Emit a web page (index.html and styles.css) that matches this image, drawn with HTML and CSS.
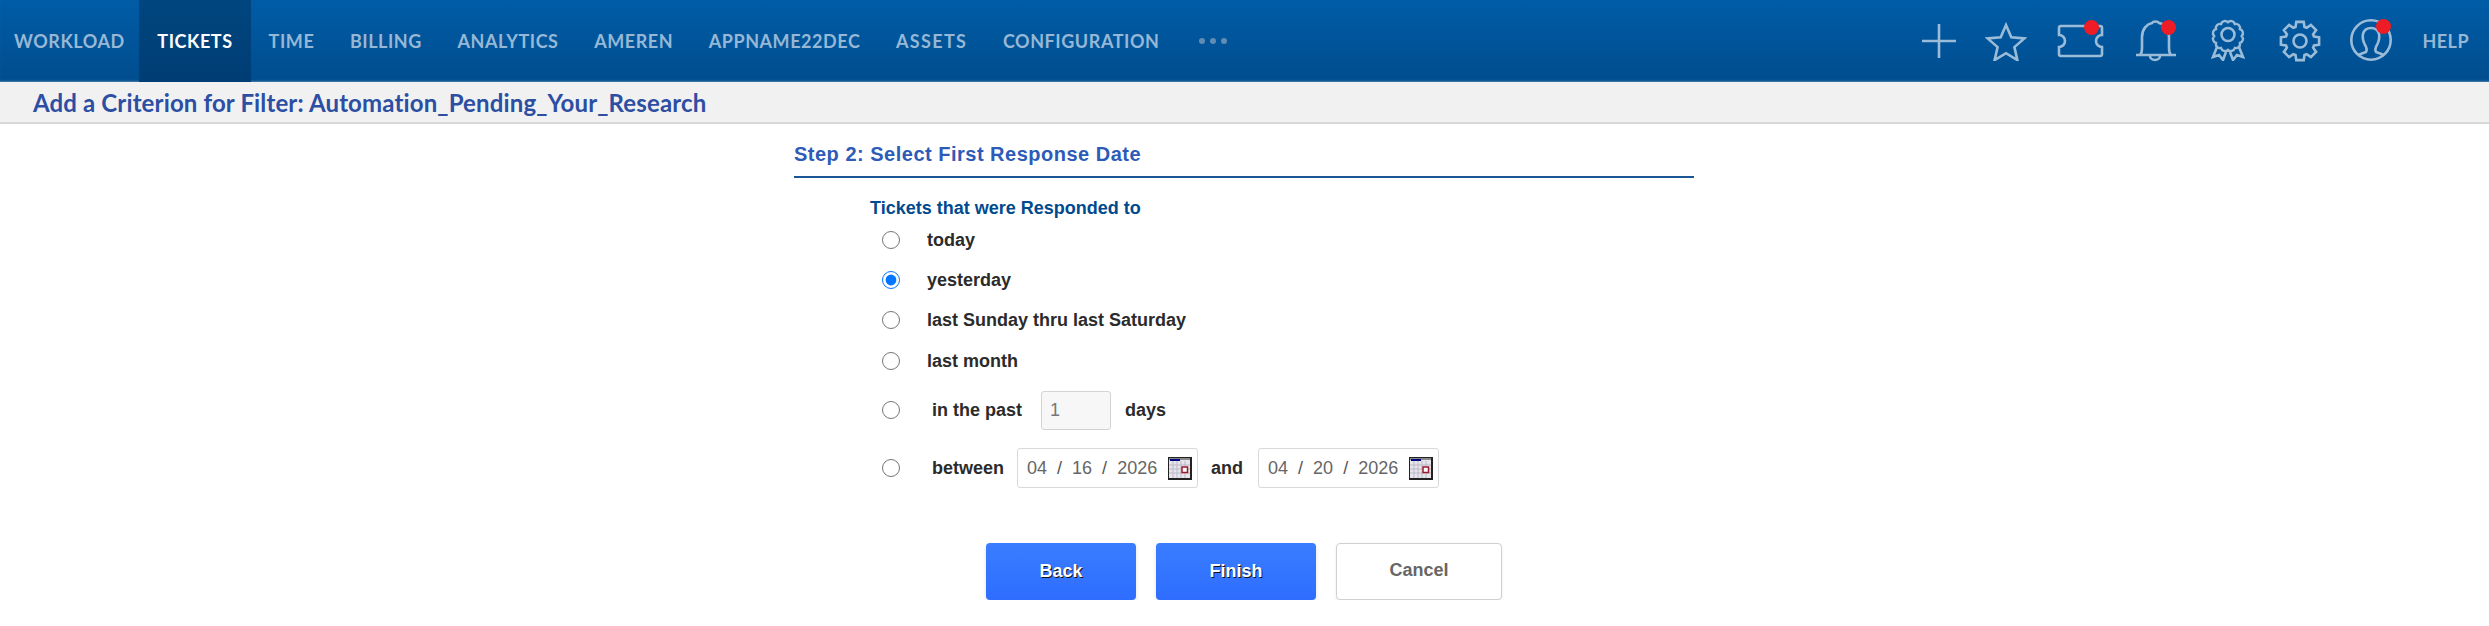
FILE: index.html
```html
<!DOCTYPE html>
<html lang="en">
<head>
<meta charset="utf-8">
<title>Add a Criterion</title>
<link rel="stylesheet" href="styles.css">
</head>
<body>
<header class="topbar">
  <nav class="nav">
    <a class="nav-item">WORKLOAD</a>
    <a class="nav-item active">TICKETS</a>
    <a class="nav-item">TIME</a>
    <a class="nav-item">BILLING</a>
    <a class="nav-item">ANALYTICS</a>
    <a class="nav-item">AMEREN</a>
    <a class="nav-item">APPNAME22DEC</a>
    <a class="nav-item nav-assets">ASSETS</a>
    <a class="nav-item">CONFIGURATION</a>
    <span class="nav-more"><i></i><i></i><i></i></span>
  </nav>
  <div class="tools">
    <svg class="tool tool-plus" width="34" height="34" viewBox="0 0 34 34"><path d="M17 0v34M0 17h34"/></svg>
    <svg class="tool tool-star" width="42" height="40" viewBox="0 0 42 40"><path d="M21 4l5.300 12.300 13.100 1.100-10 8.700 3 13L21 32.200 9.600 39.100l3-13-10-8.700 13.100-1.100z"/></svg>
    <span class="tool-wrap tool-ticket">
      <svg class="tool" width="47" height="34" viewBox="0 0 47 34"><path d="M4 2h39a2 2 0 0 1 2 2v7a6 6 0 0 0 0 12v7a2 2 0 0 1-2 2H4a2 2 0 0 1-2-2v-7a6 6 0 0 0 0-12V4a2 2 0 0 1 2-2z"/></svg>
      <b class="dot dot-ticket"></b>
    </span>
    <span class="tool-wrap tool-bell">
      <svg class="tool" width="44" height="42" viewBox="0 0 44 42"><path d="M2 35h40M6 35c1-1 2-3 2-7V17C8 9 13 4 18 3c1-2 6-2 7 0 6 1 10 6 10 14v11c0 4 1 6 2 7M16 36a5 4 0 0 0 10 0"/></svg>
      <b class="dot dot-bell"></b>
    </span>
    <svg class="tool tool-rosette" width="34" height="42" viewBox="0 0 34 42"><path d="M17 2a4.500 4.500 0 0 1 7.500 2 4.500 4.500 0 0 1 5.500 5.500 4.500 4.500 0 0 1 2 7.500 4.500 4.500 0 0 1-2 7.500 4.500 4.500 0 0 1-5.500 5.500 4.500 4.500 0 0 1-7.500 2 4.500 4.500 0 0 1-7.500-2A4.500 4.500 0 0 1 4 24.500 4.500 4.500 0 0 1 2 17a4.500 4.500 0 0 1 2-7.500A4.500 4.500 0 0 1 9.500 4 4.500 4.500 0 0 1 17 2z" transform="translate(1.300 1.400) scale(.92)"/><circle cx="17" cy="15.500" r="6.500"/><path d="M6 28L2 38l6-2 4 5 3-8M28 28l4 10-6-2-4 5-3-8"/></svg>
    <svg class="tool tool-gear" width="42" height="42" viewBox="0 0 42 42"><circle cx="21" cy="21" r="6.500"/><polygon points="16.500,7 17.300,1.900 24.700,1.900 25.500,7 27.700,7.900 31.900,4.900 37.100,10.100 34.100,14.300 35,16.500 40.100,17.300 40.100,24.700 35,25.500 34.100,27.700 37.100,31.900 31.900,37.100 27.700,34.100 25.500,35 24.700,40.100 17.300,40.100 16.500,35 14.300,34.100 10.100,37.100 4.900,31.900 7.900,27.700 7,25.500 1.900,24.700 1.900,17.300 7,16.500 7.900,14.300 4.900,10.100 10.100,4.900 14.300,7.900"/></svg>
    <span class="tool-wrap tool-user">
      <svg class="tool" width="44" height="42" viewBox="0 0 44 42"><circle cx="22" cy="21" r="19.700"/><path d="M9 36l8-3c1-2 1-4-1-7-2-4-3-7-2-11 1-4 4-6 8-6s7 2 8 6c1 4 0 7-2 11-2 3-2 5-1 7l8 3"/></svg>
      <b class="dot dot-user"></b>
    </span>
    <a class="help">HELP</a>
  </div>
</header>

<div class="subhead"><h1 class="page-title">Add a Criterion for Filter: Automation_Pending_Your_Research</h1></div>

<main class="wizard">
  <h2 class="step-title">Step 2: Select First Response Date</h2>
  <p class="group-label">Tickets that were Responded to</p>
  <form class="options">
    <label class="option"><input type="radio" name="r"><span class="option-text">today</span></label>
    <label class="option"><input type="radio" name="r" checked><span class="option-text">yesterday</span></label>
    <label class="option"><input type="radio" name="r"><span class="option-text">last Sunday thru last Saturday</span></label>
    <label class="option option-month"><input type="radio" name="r"><span class="option-text">last month</span></label>
    <label class="option option-past">
      <input type="radio" name="r"><span class="option-text wide">in the past</span>
      <input class="days-input" type="text" value="1"><span class="days-text">days</span>
    </label>
    <div class="option option-between">
      <input type="radio" name="r"><span class="option-text wide">between</span>
      <span class="date-box">
        <span class="seg">04</span><span class="slash">/</span><span class="seg">16</span><span class="slash">/</span><span class="seg">2026</span>
        <svg class="cal" width="24" height="23" viewBox="0 0 24 23"><rect width="24" height="23" fill="#222"/><rect x="1" y="1" width="21" height="20" fill="#e8e4ec"/><rect x="1" y="1" width="21" height="2" fill="#888"/><rect x="2" y="2" width="10" height="2" fill="#000080"/><path d="M1 8h21M1 12h21M1 16h21M5 4v17M9 4v17M13 4v17M17 4v17" stroke="#b9b9c4" fill="none"/><rect x="14" y="10" width="5.500" height="5.500" fill="#fff" stroke="#9b1c2c" stroke-width="1.500"/></svg>
      </span>
      <span class="and-text">and</span>
      <span class="date-box">
        <span class="seg">04</span><span class="slash">/</span><span class="seg">20</span><span class="slash">/</span><span class="seg">2026</span>
        <svg class="cal" width="24" height="23" viewBox="0 0 24 23"><rect width="24" height="23" fill="#222"/><rect x="1" y="1" width="21" height="20" fill="#e8e4ec"/><rect x="1" y="1" width="21" height="2" fill="#888"/><rect x="2" y="2" width="10" height="2" fill="#000080"/><path d="M1 8h21M1 12h21M1 16h21M5 4v17M9 4v17M13 4v17M17 4v17" stroke="#b9b9c4" fill="none"/><rect x="14" y="10" width="5.500" height="5.500" fill="#fff" stroke="#9b1c2c" stroke-width="1.500"/></svg>
      </span>
    </div>
  </form>
  <div class="actions">
    <button class="btn btn-back" type="button">Back</button>
    <button class="btn btn-finish" type="button">Finish</button>
    <button class="btn btn-cancel" type="button">Cancel</button>
  </div>
</main>
</body>
</html>
```
FILE: styles.css
```css
* { box-sizing: border-box; }
html, body { margin: 0; padding: 0; background: #fff; }
body { font-family: "Liberation Sans", Arial, sans-serif; overflow: hidden; }

.topbar {
  height: 82px;
  display: flex;
  justify-content: space-between;
  background: linear-gradient(#005ca6, #004d8e);
  box-shadow: inset 0 -2px 2px -1px #4a7fb0;
}
.nav { display: flex; align-items: stretch; padding-left: 14px; }
.nav-item {
  display: flex;
  align-items: center;
  padding: 0 35.600px 0 0;
  font: 700 18px Lato, sans-serif;
  letter-spacing: .55px;
  color: #96b8d6;
}
.nav-item.nav-assets { letter-spacing: 1.350px; }
.nav-item.active {
  margin: 0 18px 0 -21px;
  padding: 0 18px;
  color: #fff;
  background: linear-gradient(#00467f, #003d74);
}
.nav-more { display: flex; align-items: center; gap: 5px; margin-left: 4px; }
.nav-more i { width: 6px; height: 6px; border-radius: 50%; background: #5f8db6; }

.tools { display: flex; align-items: center; padding-right: 20px; }
.tool { fill: none; stroke: #9bbcd8; stroke-width: 2.600; display: block; }
.tool-wrap { position: relative; display: block; }
.tool-plus { margin-right: 29px; }
.tool-star { margin-right: 30px; }
.tool-ticket { margin-right: 30px; }
.tool-bell { margin-right: 33px; }
.tool-rosette { margin-right: 34px; margin-top: -2px; }
.tool-gear { margin-right: 28px; }
.tool-user { margin-right: 29px; margin-top: -2px; }
.dot { position: absolute; width: 15px; height: 15px; border-radius: 50%; background: #ee1c25; }
.dot-ticket { top: -4px; left: 27px; }
.dot-bell { top: 0; left: 27px; }
.dot-user { top: 0; left: 27px; }
.help { font: 700 18px Lato, sans-serif; letter-spacing: .45px; color: #96b8d6; }

.subhead {
  height: 42px;
  padding-left: 33px;
  display: flex;
  align-items: center;
  background: #f1f1f1;
  border-bottom: 2px solid #d8d8d8;
}
.page-title { margin: 0; font: 700 24px Lato, sans-serif; letter-spacing: .14px; color: #2c4ea3; }

.wizard { width: 901px; padding-right: 1px; margin: 0 auto; }
.step-title {
  margin: 0;
  height: 54px;
  padding-top: 19px;
  font-size: 20px;
  line-height: 22px;
  font-weight: 700;
  letter-spacing: .5px;
  color: #2d5bb8;
  border-bottom: 2px solid #1b5694;
}
.group-label {
  margin: 0 0 0 76px;
  height: 42px;
  padding-top: 20px;
  font-size: 18px;
  line-height: 20px;
  font-weight: 700;
  color: #004a8f;
}
.options { display: flex; flex-direction: column; }
.option {
  display: flex;
  align-items: center;
  height: 40px;
  padding-left: 88px;
  font-size: 18px;
  font-weight: 700;
  color: #2b2b2b;
}
.option input[type="radio"] { margin: 0; width: 18px; height: 18px; flex: none; }
.option-text { margin-left: 27px; }
.option-text.wide { margin-left: 32px; }
.option-month { margin-top: 1px; }
.option-past { margin-top: 9px; }
.option-between { margin-top: 18px; }
.days-input {
  width: 70px;
  height: 39px;
  margin-left: 19px;
  padding: 0 8px;
  font: 400 18px "Liberation Sans", Arial, sans-serif;
  color: #777;
  background: #f7f7f7;
  border: 1px solid #d3d3d3;
  border-radius: 3px;
}
.days-text { margin-left: 14px; }
.date-box {
  display: flex;
  align-items: center;
  width: 181px;
  height: 40px;
  margin-left: 13px;
  padding-left: 9px;
  font-size: 18px;
  font-weight: 400;
  color: #666;
  background: #fff;
  border: 1px solid #d9d9d9;
  border-radius: 3px;
}
.slash { margin: 0 10px; color: #555; }
.cal { margin-left: 11px; flex: none; }
.and-text { margin-left: 13px; margin-right: 2px; }

.actions { display: flex; justify-content: center; gap: 20px; margin-top: 55px; }
.btn {
  height: 57px;
  font: 700 18px "Liberation Sans", Arial, sans-serif;
  border-radius: 4px;
  cursor: pointer;
}
.btn-back, .btn-finish {
  color: #fff;
  border: 0;
  background: linear-gradient(#3a7dff, #2e6dff);
  text-shadow: 1px 1px 0 #111;
  box-shadow: 0 2px 4px rgba(0,0,0,.12);
}
.btn-back { width: 150px; }
.btn-finish { width: 160px; }
.btn-cancel {
  width: 166px;
  padding-bottom: 3px;
  color: #666;
  background: #fff;
  border: 1px solid #d0d0d0;
  box-shadow: 0 1px 3px rgba(0,0,0,.08);
}
```
